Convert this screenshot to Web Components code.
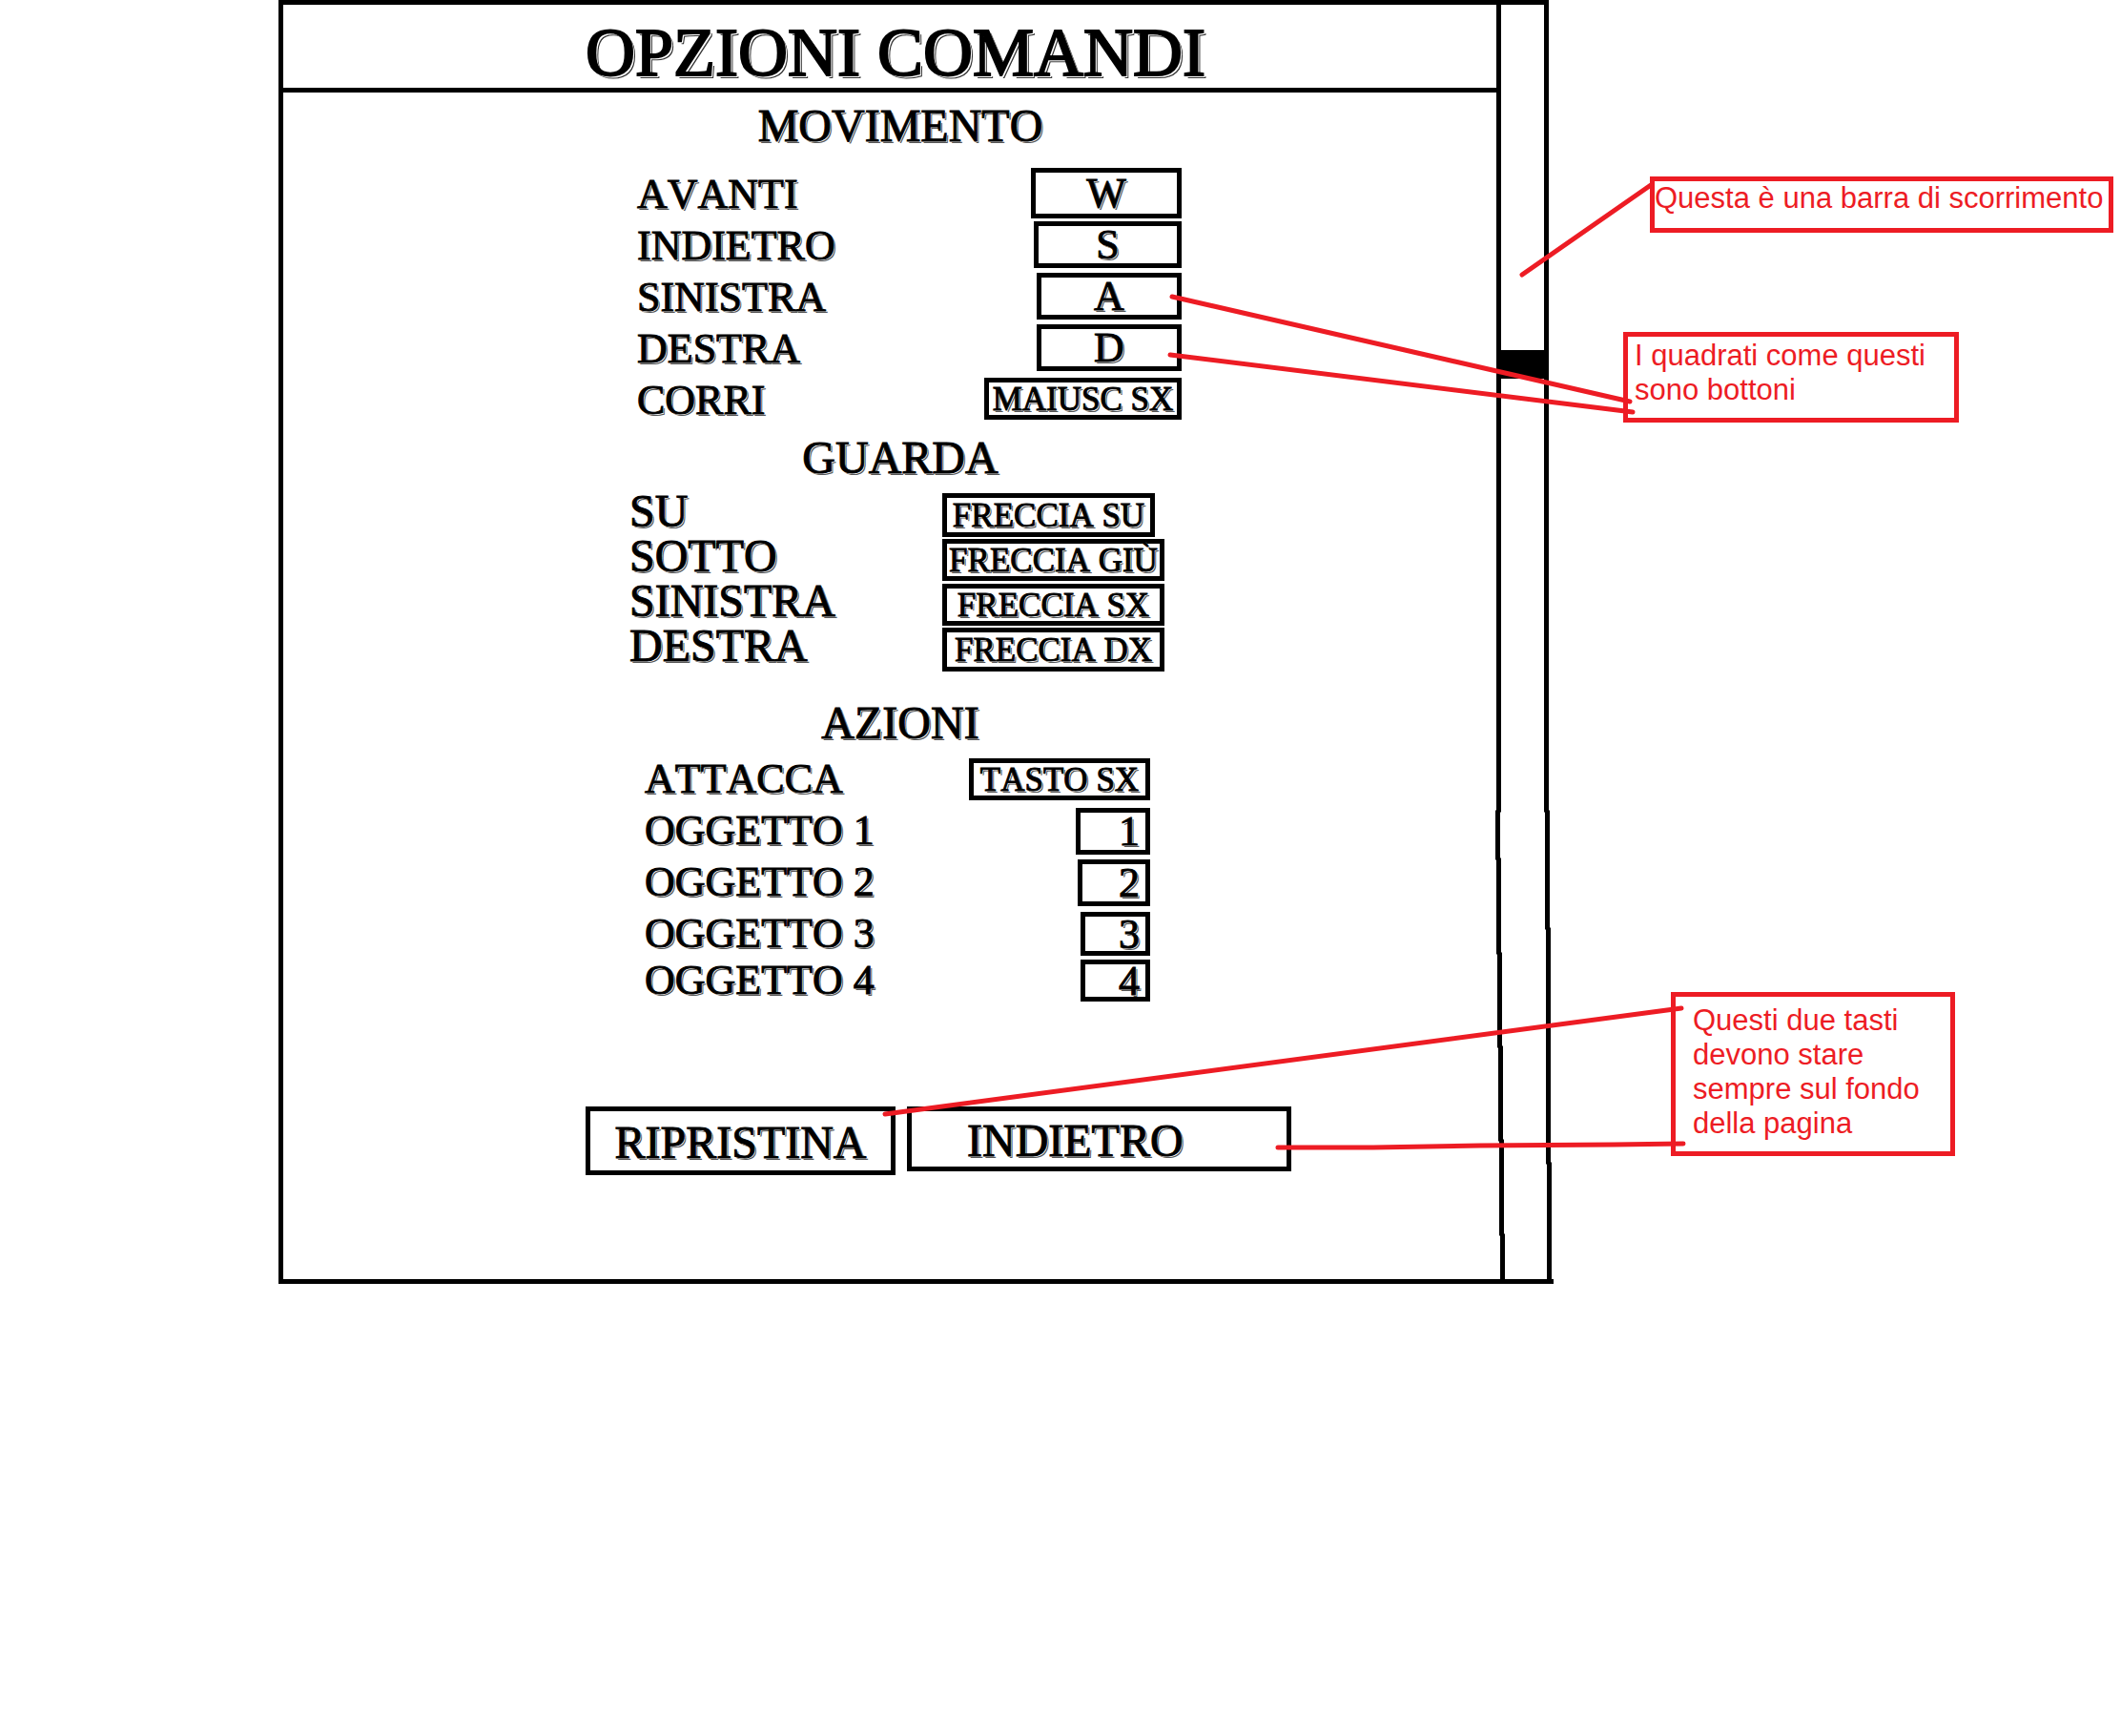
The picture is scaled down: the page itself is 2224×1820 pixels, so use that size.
<!DOCTYPE html>
<html lang="it">
<head>
<meta charset="utf-8">
<title>Opzioni comandi</title>
<style>
  body { margin: 0; background: #fff; }
</style>
</head>
<body>
<options-board></options-board>
<script>
// Shared lettering: dark capitals with a thin engraved shadow line.
const engraved = `
  font-family: "Liberation Serif", serif;
  font-weight: 400;
  font-kerning: none;
  color: #000;
  -webkit-text-stroke: 1px #000;
  text-shadow: 1px 1px 0 #fff, 2px 2px 0 #555;
  white-space: nowrap;
`;

function define(name, html, setup) {
  const template = document.createElement('template');
  template.innerHTML = html;
  customElements.define(name, class extends HTMLElement {
    constructor() {
      super();
      this.attachShadow({ mode: 'open' }).append(template.content.cloneNode(true));
    }
    connectedCallback() { if (setup) setup(this, this.shadowRoot); }
  });
}

// One command: its name and the button that rebinds its key.
define('key-row', `
  <style>
    :host { display: flex; align-items: center; justify-content: var(--spread, space-between); height: var(--row); }
    label { ${engraved} font-size: var(--label-size, 44px); line-height: 44px; padding: var(--label-pad, 0); flex: 0 0 var(--label-col, auto); }
    button { ${engraved} box-sizing: border-box; background: none; border: 5px solid #000; border-radius: 0; margin: 0; padding: 2px 0 0;
      font-size: 44px; line-height: 32px; text-align: center; cursor: pointer; }
    :host([small]) button { font-size: 35px; }
    :host([end]) button { text-align: right; padding-right: 6px; }
  </style>
  <label for="key"><slot></slot></label>
  <button id="key" type="button"></button>
`, (host, root) => {
  const button = root.querySelector('button');
  button.textContent = host.getAttribute('key');
  button.style.width = host.getAttribute('w') + 'px';
  button.style.height = host.getAttribute('h') + 'px';
});

define('key-section', `
  <style>
    :host { display: block; }
    h2 { ${engraved} font-size: 48px; line-height: 64px; margin: 0 0 0 22px; text-align: center; }
    .rows { width: var(--rows-width); margin-left: var(--rows-left); padding-top: var(--rows-gap); }
  </style>
  <section><h2></h2><div class="rows"><slot></slot></div></section>
`, (host, root) => { root.querySelector('h2').textContent = host.getAttribute('heading'); });

define('menu-button', `
  <style>
    :host { display: block; }
    button { ${engraved} box-sizing: border-box; width: 100%; height: 100%; background: none; border: 5px solid #000; border-radius: 0;
      margin: 0; padding: 2px 0 0 var(--inset, 0); text-align: var(--align, center); font-size: 48px; cursor: pointer; }
  </style>
  <button type="button"><slot></slot></button>
`);

define('scroll-track', `
  <style>
    :host { display: block; }
    svg { display: block; width: 100%; height: 100%; overflow: visible; }
  </style>
  <svg viewBox="0 0 55 1346" preserveAspectRatio="none" role="img" aria-label="Barra di scorrimento">
    <g fill="none" stroke="#000" stroke-width="5">
      <path d="M0 2.5H55M2.5 0V850L1.5 851V900L2.5 901V999L3.5 1000V1097L4.5 1098V1195L5.5 1196V1294L6.5 1295V1347"/>
      <path d="M52.5 0V850L53.5 851V973L54.5 974V1219L55.5 1220V1346"/>
      <path d="M0 1343.5H60"/>
    </g>
    <rect x="2" y="367" width="50" height="30"/>
  </svg>
`);

define('side-note', `
  <style>
    :host { display: block; box-sizing: border-box; border: 5px solid #ed1c24; color: #ed1c24;
      font: 31px/36px "Liberation Sans", sans-serif; }
    p { margin: 0; }
  </style>
  <p><slot></slot></p>
`);

define('pointer-lines', `
  <style>
    :host { display: block; position: absolute; inset: 0; pointer-events: none; }
    svg { display: block; width: 100%; height: 100%; }
  </style>
  <svg viewBox="0 0 2224 1346" preserveAspectRatio="none" aria-hidden="true">
    <path d="M1596 288L1731 194M1229 311L1709 421M1227 372L1712 432M928 1168L1763 1057M1340 1203H1440L1552 1201L1692 1200L1765 1199"
      fill="none" stroke="#ed1c24" stroke-width="5" stroke-linecap="round"/>
  </svg>
`);

define('options-board', `
  <style>
    :host { display: grid; position: relative;
      grid-template-columns: minmax(0, 292fr) minmax(0, 1277fr) minmax(0, 55fr) minmax(0, 600fr); }
    main { grid-column: 2; border: solid #000; border-width: 5px 0 5px 5px; padding-bottom: 109px; }
    h1 { ${engraved} font-size: 72px; line-height: 73px; margin: 0; padding: 14px 0 0 12px; text-align: center; border-bottom: 5px solid #000;
      text-shadow: 2px 2px 0 #fff, 3px 3px 0 #333; -webkit-text-stroke: 2px #000; }
    .move { --row: 54px; --label-pad: 4px 0 0; --rows-left: 371px; --rows-width: 571px; --rows-gap: 11px; padding-top: 3px; }
    .look { --row: 47px; --label-pad: 0 0 8px; --label-size: 48px; --label-col: 328px; --spread: flex-start;
      --rows-left: 363px; --rows-width: 571px; --rows-gap: 4px; padding-top: 3px; }
    .act { --row: 54px; --rows-left: 379px; --rows-width: 530px; --rows-gap: 0px; padding-top: 22px; }
    .act :last-child { --row: 44px; }
    footer { display: flex; gap: 12px; margin: 110px 0 0 317px; }
    .reset { width: 325px; height: 72px; }
    .back { width: 403px; height: 68px; --align: left; --inset: 58px; }
    aside { display: flex; flex-direction: column; align-items: flex-start; padding-top: 185px; }
    .bar { width: 486px; height: 59px; margin-left: 106px; white-space: nowrap; }
    .squares { width: 352px; height: 95px; margin: 104px 0 0 78px; padding: 2px 7px; }
    .bottom { width: 298px; height: 172px; margin: 597px 0 0 128px; padding: 7px 18px; }
    side-note { box-sizing: border-box; }
  </style>
  <main>
    <h1>OPZIONI COMANDI</h1>
    <key-section class="move" heading="MOVIMENTO">
      <key-row key="W" w="158" h="53">AVANTI</key-row>
      <key-row key="S" w="155" h="49">INDIETRO</key-row>
      <key-row key="A" w="152" h="49">SINISTRA</key-row>
      <key-row key="D" w="152" h="49">DESTRA</key-row>
      <key-row small key="MAIUSC SX" w="207" h="44">CORRI</key-row>
    </key-section>
    <key-section class="look" heading="GUARDA">
      <key-row small key="FRECCIA SU" w="223" h="46">SU</key-row>
      <key-row small key="FRECCIA GIÙ" w="233" h="44">SOTTO</key-row>
      <key-row small key="FRECCIA SX" w="233" h="44">SINISTRA</key-row>
      <key-row small key="FRECCIA DX" w="233" h="46">DESTRA</key-row>
    </key-section>
    <key-section class="act" heading="AZIONI">
      <key-row small key="TASTO SX" w="190" h="44">ATTACCA</key-row>
      <key-row end key="1" w="78" h="49">OGGETTO 1</key-row>
      <key-row end key="2" w="76" h="49">OGGETTO 2</key-row>
      <key-row end key="3" w="73" h="46">OGGETTO 3</key-row>
      <key-row end key="4" w="73" h="44">OGGETTO 4</key-row>
    </key-section>
    <footer>
      <menu-button class="reset">RIPRISTINA</menu-button>
      <menu-button class="back">INDIETRO</menu-button>
    </footer>
  </main>
  <scroll-track></scroll-track>
  <aside>
    <side-note class="bar">Questa è una barra di scorrimento</side-note>
    <side-note class="squares">I quadrati come questi sono bottoni</side-note>
    <side-note class="bottom">Questi due tasti devono stare sempre sul fondo della pagina</side-note>
  </aside>
  <pointer-lines></pointer-lines>
`);
</script>
</body>
</html>
